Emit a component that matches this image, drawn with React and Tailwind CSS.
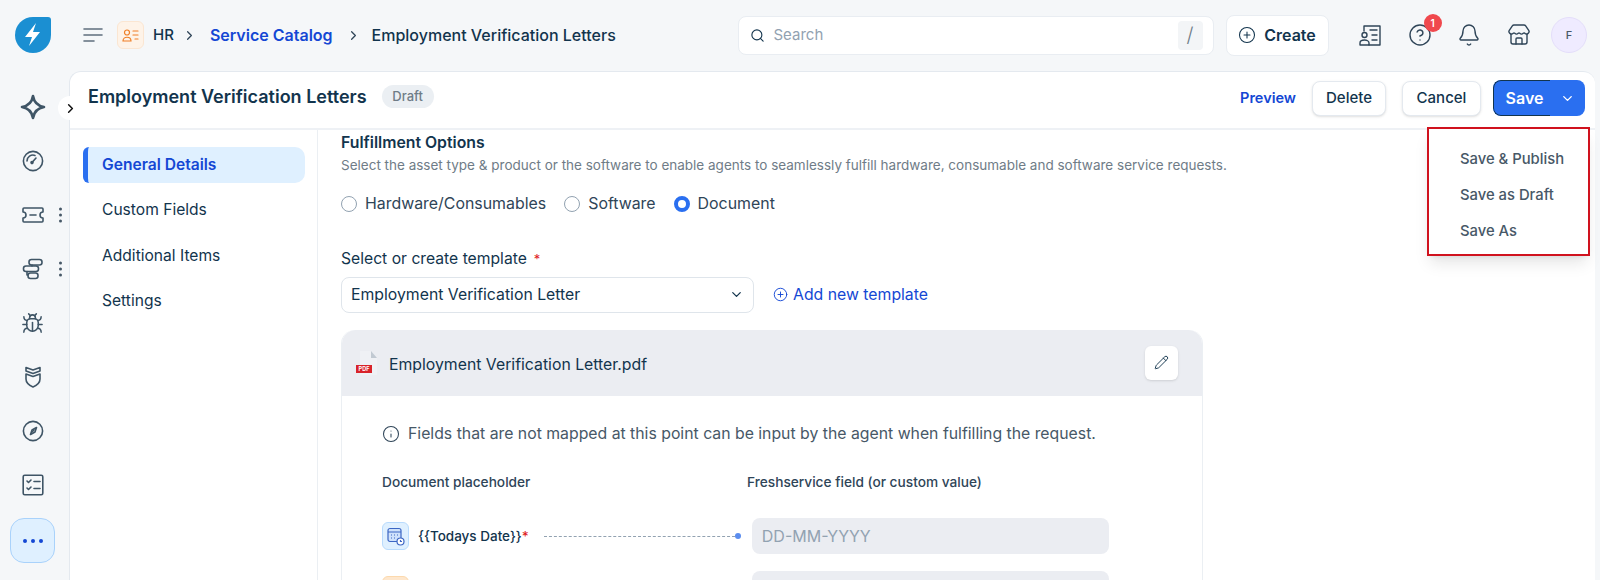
import { Bell, Bug, ChevronDown, ChevronRight, CircleHelp, CirclePlus, Info, Pencil, Search, Store } from 'lucide-react';

function Logo() {
  return (
    <svg width="36" height="36" viewBox="0 0 36 36">
      <path d="M18 0h15a3 3 0 0 1 3 3v15a18 18 0 1 1-18-18z" fill="#1b8fd2" />
      <path d="M21 6 10 20h7l-3 9 11-14h-7z" fill="#fff" />
    </svg>
  );
}

function Hamburger() {
  return (
    <svg width="20" height="14" viewBox="0 0 20 14" fill="none" stroke="#5f6f7d" strokeWidth="1.6" strokeLinecap="round">
      <path d="M1 1h18M1 7h18M1 13h10" />
    </svg>
  );
}

function HrIcon() {
  return (
    <div className="flex h-[28px] w-[27px] items-center justify-center rounded-md border border-[#fbe6d2] bg-[#fef3e8]">
      <svg width="17" height="13" viewBox="0 0 17 13" fill="none" stroke="#ef7f26" strokeWidth="1.2" strokeLinecap="round">
        <circle cx="5" cy="3.5" r="2.5" />
        <path d="M1 12c0-5 8-5 8 0zM11 2h5M11 6h5M13 10h3" />
      </svg>
    </div>
  );
}

function Sparkle() {
  return (
    <svg width="28" height="28" viewBox="0 0 28 28" fill="none" stroke="#3f5566" strokeWidth="2.6" strokeLinejoin="round">
      <path d="M14 3c1 6 5 10 11 11-6 1-10 5-11 11-1-6-5-10-11-11 6-1 10-5 11-11z" />
    </svg>
  );
}

function RailIcon({ children }) {
  return (
    <svg width="22" height="22" viewBox="0 0 22 22" fill="none" stroke="#3f5566" strokeWidth="1.6" strokeLinecap="round" strokeLinejoin="round">
      {children}
    </svg>
  );
}

function VDots() {
  return (
    <span className="absolute left-[59px] top-1/2 flex -translate-y-1/2 flex-col gap-[3px]">
      <i className="h-[3px] w-[3px] rounded-full bg-[#475867]" />
      <i className="h-[3px] w-[3px] rounded-full bg-[#475867]" />
      <i className="h-[3px] w-[3px] rounded-full bg-[#475867]" />
    </span>
  );
}

const railItems = [
  {
    key: 'dash',
    icon: (
      <RailIcon>
        <circle cx="11" cy="11" r="9.6" />
        <path d="M5 11a6 6 0 0 1 8-5.6M10 12.5l4-4.5" />
        <circle cx="10" cy="12.6" r="1" fill="#3f5566" />
      </RailIcon>
    ),
  },
  {
    key: 'ticket',
    dots: true,
    icon: (
      <RailIcon>
        <path d="M2 4h18a1 1 0 0 1 1 1v3a3 3 0 0 0 0 6v3a1 1 0 0 1-1 1H2a1 1 0 0 1-1-1v-3a3 3 0 0 0 0-6V5a1 1 0 0 1 1-1z" />
        <path d="M8 11h6" />
      </RailIcon>
    ),
  },
  {
    key: 'flow',
    dots: true,
    icon: (
      <RailIcon>
        <rect x="7" y="1.500" width="13" height="5.500" rx="2.500" />
        <rect x="1.500" y="8" width="15" height="5.500" rx="2.500" />
        <rect x="6" y="15" width="10" height="5.500" rx="2.500" />
        <path d="M5 13.500v3.500h1M10 7v1" />
      </RailIcon>
    ),
  },
  { key: 'bug', icon: <Bug size={23} strokeWidth={1.6} color="#3f5566" /> },
  {
    key: 'shield',
    icon: (
      <RailIcon>
        <path d="M4 1.500 11 4l7-2.500V5l-7 2.500L4 5zM4 8l7 2.500L18 8v5c0 4-3.500 6.500-7 8-3.500-1.500-7-4-7-8z" />
      </RailIcon>
    ),
  },
  {
    key: 'compass',
    icon: (
      <RailIcon>
        <circle cx="11" cy="11" r="9.600" />
        <path d="M14.500 7.500 13 12l-4.500 2.500L10 10z" />
        <path d="M10 12l2-2" />
      </RailIcon>
    ),
  },
  {
    key: 'todo',
    icon: (
      <RailIcon>
        <rect x="1.200" y="1.200" width="19.600" height="19.600" rx="1.500" />
        <path d="m5 7 1.500 1.500L9 6M5 14l1.500 1.500L9 13M12 7.500h6M12 14.500h6" />
      </RailIcon>
    ),
  },
];

function Rail() {
  return (
    <aside className="flex w-[69px] shrink-0 flex-col items-center pt-[9px] pr-[4px]">
      <div className="flex h-[54px] w-full items-center justify-center">
        <Sparkle />
      </div>
      {railItems.map(item => (
        <div key={item.key} className="relative flex h-[54px] w-full items-center justify-center">
          {item.icon}
          {item.dots && <VDots />}
        </div>
      ))}
      <div className="mt-[6px] flex h-[45px] w-[45px] items-center justify-center gap-[4px] rounded-[14px] border border-[#a9d2fb] bg-[#dff0ff]">
        <i className="h-[4px] w-[4px] rounded-full bg-[#1447d4]" />
        <i className="h-[4px] w-[4px] rounded-full bg-[#1447d4]" />
        <i className="h-[4px] w-[4px] rounded-full bg-[#1447d4]" />
      </div>
    </aside>
  );
}

function ContactsIcon() {
  return (
    <svg width="24" height="24" viewBox="0 0 24 24" fill="none" stroke="#2f4558" strokeWidth="1.4" strokeLinecap="round" strokeLinejoin="round">
      <path d="M6 8V3h16v19H11" />
      <circle cx="6.500" cy="12" r="2.500" />
      <path d="M2 22v-2c0-4 9-4 9 0v2zM12 7h7M14 12h5M14 17h5" />
    </svg>
  );
}

function TopBar() {
  return (
    <header className="flex h-[71px] shrink-0 items-center pb-[1px]">
      <div className="flex w-[69px] shrink-0 justify-center pr-[3px]">
        <Logo />
      </div>
      <div className="ml-[14px] mr-[14px]">
        <Hamburger />
      </div>
      <HrIcon />
      <span className="ml-[9px] text-[15px] font-medium text-[#12344d]">HR</span>
      <ChevronRight size={15} color="#2f4558" strokeWidth={2} className="ml-[8px]" />
      <span className="ml-[13px] text-[16px] font-semibold text-[#1447d4]">Service Catalog</span>
      <ChevronRight size={15} color="#2f4558" strokeWidth={2} className="ml-[13px]" />
      <span className="ml-[11px] text-[16px] font-medium text-[#12344d]">Employment Verification Letters</span>

      <div className="ml-auto flex h-[39px] w-[476px] items-center rounded-lg border border-[#e9edf2] bg-white pl-[11px] pr-[10px]">
        <Search size={15} color="#12344d" strokeWidth={1.8} />
        <span className="ml-[9px] text-[15px] text-[#92a2b1]">Search</span>
        <span className="ml-auto flex h-[29px] w-[25px] items-center justify-center rounded bg-[#f3f5f7] text-[20px] font-light text-[#6f7c87]">/</span>
      </div>
      <div className="ml-[12px] flex h-[41px] w-[103px] items-center justify-center gap-[8px] rounded-lg border border-[#e9edf2] bg-white">
        <CirclePlus size={18} color="#12344d" strokeWidth={1.4} />
        <span className="text-[16px] font-semibold text-[#12344d]">Create</span>
      </div>
      <div className="ml-[29.500px] flex items-center gap-[25.500px] pr-[13px]">
        <ContactsIcon />
        <div className="relative">
          <CircleHelp size={24} color="#2f4558" strokeWidth={1.4} />
          <span className="absolute -right-[10px] -top-[9px] flex h-[18px] w-[18px] items-center justify-center rounded-full bg-[#f0484d] text-[10px] font-semibold text-white">1</span>
        </div>
        <Bell size={24} color="#2f4558" strokeWidth={1.4} />
        <Store size={24} color="#2f4558" strokeWidth={1.4} />
        <div className="-ml-[5px] flex h-[36px] w-[36px] items-center justify-center rounded-full border border-[#e4defa] bg-[#efebff] text-[11px] font-medium text-[#475867]">F</div>
      </div>
    </header>
  );
}

function PanelHeader() {
  return (
    <div className="relative flex h-[58px] shrink-0 items-center border-b-2 border-[#eef1f5] pb-[4px] pl-[18px] pr-[10px]">
      <span className="absolute -left-[12px] top-[24px] flex h-[24px] w-[24px] items-center justify-center rounded-full bg-white">
        <ChevronRight size={15} color="#111" strokeWidth={2.4} />
      </span>
      <h1 className="-mt-[4px] text-[18px] font-semibold text-[#12344d]">Employment Verification Letters</h1>
      <span className="-mt-[3px] ml-[15px] flex h-[23px] w-[52px] items-center justify-center rounded-full bg-[#ebeff3] text-[13px] font-medium text-[#6f7c87]">Draft</span>
      <span className="ml-auto text-[14.500px] font-semibold text-[#1447d4]">Preview</span>
      <button className="ml-[16px] h-[35px] w-[74px] rounded-lg border border-[#e4e9ef] bg-white text-[15px] font-medium text-[#12344d] shadow-sm">Delete</button>
      <button className="ml-[16px] h-[35px] w-[79px] rounded-lg border border-[#e4e9ef] bg-white text-[15px] font-medium text-[#12344d] shadow-sm">Cancel</button>
      <div className="ml-[12px] flex h-[36px] w-[92px] overflow-hidden rounded-lg bg-[#2a6ff0] text-white">
        <span className="flex w-[57px] items-center justify-center rounded-l-lg border border-r-0 border-[#12344d] pl-[5px] text-[16px] font-semibold">Save</span>
        <span className="flex flex-1 items-center justify-center">
          <ChevronDown size={15} strokeWidth={2.2} />
        </span>
      </div>
    </div>
  );
}

function SaveMenu() {
  return (
    <div className="absolute right-[5px] top-[55px] z-10 h-[129px] w-[163px] border-2 border-[#d0121e] bg-white shadow-lg">
      <ul className="flex flex-col gap-[18px] pl-[31px] pt-[21px] text-[14.800px] font-medium leading-[18px] text-[#475867]">
        <li>Save &amp; Publish</li>
        <li>Save as Draft</li>
        <li>Save As</li>
      </ul>
    </div>
  );
}

const navItems = ['Custom Fields', 'Additional Items', 'Settings'];

function SideNav() {
  return (
    <nav className="w-[248px] shrink-0 border-r border-[#ebeff3] pl-[13px] pr-[12px] pt-[17px]">
      <div className="flex h-[36px] items-center rounded-r-[10px] rounded-l-md border-l-[5px] border-[#2a6ff0] bg-[#dff0ff] pl-[14px] text-[15.600px] font-semibold text-[#1447d4]">General Details</div>
      {navItems.map(item => (
        <div key={item} className="mt-[9.200px] flex h-[36px] items-center pl-[19px] text-[15.600px] text-[#12344d]">{item}</div>
      ))}
    </nav>
  );
}

function Radio({ label, checked }) {
  return (
    <label className="flex items-center gap-[8px]">
      {checked ? (
        <span className="h-[16px] w-[16px] rounded-full border-[4px] border-[#2a6ff0] bg-white" />
      ) : (
        <span className="h-[16px] w-[16px] rounded-full border border-[#92a2b1] bg-white" />
      )}
      <span className="text-[15.900px] text-[#2f4558]">{label}</span>
    </label>
  );
}

function PdfIcon() {
  return (
    <svg width="24" height="26" viewBox="0 0 24 26">
      <path d="M5 1h10l7 7v17H5z" fill="#eff1f5" />
      <path d="M16 1l6 7h-6z" fill="#c1c9d2" />
      <rect x="1" y="15" width="16" height="8" fill="#d8232a" />
      <text x="9" y="21.200" textAnchor="middle" fontSize="5.500" fontWeight="700" fill="#fff">PDF</text>
    </svg>
  );
}

function CalendarIcon() {
  return (
    <div className="flex h-[28px] w-[27px] items-center justify-center rounded-md border border-[#b9dbfd] bg-[#dff0ff]">
      <svg width="18" height="19" viewBox="0 0 18 19" fill="none" stroke="#3c66c4" strokeWidth="1.200">
        <rect x="1" y="1.500" width="13" height="13" rx="2" fill="#cfe2fb" />
        <path d="M1 5h13M4 8h1M7 8h1M10 8h1M4 11h1M7 11h1" />
        <circle cx="13.500" cy="14.500" r="3.500" fill="#fff" />
        <path d="M13.500 13v1.500h1.500" />
      </svg>
    </div>
  );
}

function TemplateCard() {
  return (
    <div className="mt-[17px] w-[862px] rounded-t-[14px] border-x border-[#ebeff3]">
      <div className="flex h-[66px] items-center rounded-t-[14px] bg-[#ebedf2] pl-[13px] pr-[24px]">
        <PdfIcon />
        <span className="ml-[10px] mt-[3px] text-[15.800px] text-[#12344d]">Employment Verification Letter.pdf</span>
        <button className="ml-auto flex h-[34px] w-[33px] items-center justify-center rounded-md bg-white shadow-sm">
          <Pencil size={15} color="#12344d" strokeWidth={1.5} />
        </button>
      </div>
      <div className="pl-[40px] pt-[26px]">
        <div className="flex items-center gap-[8px]">
          <Info size={18} color="#2f4558" strokeWidth={1.4} />
          <span className="text-[15.800px] text-[#475867]">Fields that are not mapped at this point can be input by the agent when fulfilling the request.</span>
        </div>
        <div className="mt-[26px] flex text-[13.700px] font-medium text-[#2f4558]">
          <span className="w-[365px]">Document placeholder</span>
          <span>Freshservice field (or custom value)</span>
        </div>
        <div className="mt-[26px] flex items-center">
          <CalendarIcon />
          <span className="ml-[9px] text-[13.500px] font-medium text-[#12344d]">{'{{Todays Date}}'}<span className="text-[#e01b24]">*</span></span>
          <span className="ml-[15px] w-[191px] border-t border-dashed border-[#92a2b1]" />
          <span className="h-[6px] w-[6px] rounded-full bg-[#5b8def]" />
          <div className="ml-[11px] flex h-[36px] w-[357px] items-center rounded-lg bg-[#ebedf2] pl-[10px] text-[16px] text-[#92a2b1]">DD-MM-YYYY</div>
        </div>
        <div className="mt-[17px] flex items-start">
          <div className="mt-[5px] h-[28px] w-[27px] rounded-md border border-[#fcd9ad] bg-[#fee7cd]" />
          <div className="ml-[343px] h-[36px] w-[357px] rounded-lg bg-[#ebedf2]" />
        </div>
      </div>
    </div>
  );
}

function Content() {
  return (
    <section className="min-w-0 flex-1 overflow-hidden pl-[23px] pt-[3px]">
      <h2 className="text-[15.800px] font-semibold leading-[20px] text-[#12344d]">Fulfillment Options</h2>
      <p className="mt-[2px] text-[13.500px] leading-[20px] text-[#6f7c87]">Select the asset type &amp; product or the software to enable agents to seamlessly fulfill hardware, consumable and software service requests.</p>
      <div className="mt-[17px] flex items-center gap-[18px]">
        <Radio label="Hardware/Consumables" />
        <Radio label="Software" />
        <Radio label="Document" checked />
      </div>
      <div className="mt-[31px] flex items-center text-[15.700px] leading-[24px] text-[#12344d]">
        Select or create template
        <span className="ml-[7px] text-[13px] text-[#e01b24]">*</span>
      </div>
      <div className="mt-[6px] flex items-center">
        <div className="flex h-[36px] w-[413px] items-center justify-between rounded-lg border border-[#dfe5eb] bg-white pl-[9px] pr-[9px] text-[15.800px] text-[#12344d]">
          Employment Verification Letter
          <ChevronDown size={15} color="#12344d" strokeWidth={2} />
        </div>
        <CirclePlus size={15} color="#1447d4" strokeWidth={1.5} className="ml-[19px]" />
        <span className="ml-[5px] text-[15.800px] text-[#1447d4]">Add new template</span>
      </div>
      <TemplateCard />
    </section>
  );
}

export default function App() {
  return (
    <div className="flex h-[580px] w-full flex-col overflow-hidden bg-[#f5f7f9] font-['Inter',sans-serif]">
      <TopBar />
      <div className="flex min-h-0 flex-1">
        <Rail />
        <main className="relative mr-[5px] flex min-w-0 flex-1 flex-col rounded-tl-[12px] rounded-tr-[12px] border-l border-t border-[#e4e9ef] bg-white">
          <PanelHeader />
          <div className="flex min-h-0 flex-1">
            <SideNav />
            <Content />
          </div>
          <SaveMenu />
        </main>
      </div>
    </div>
  );
}
